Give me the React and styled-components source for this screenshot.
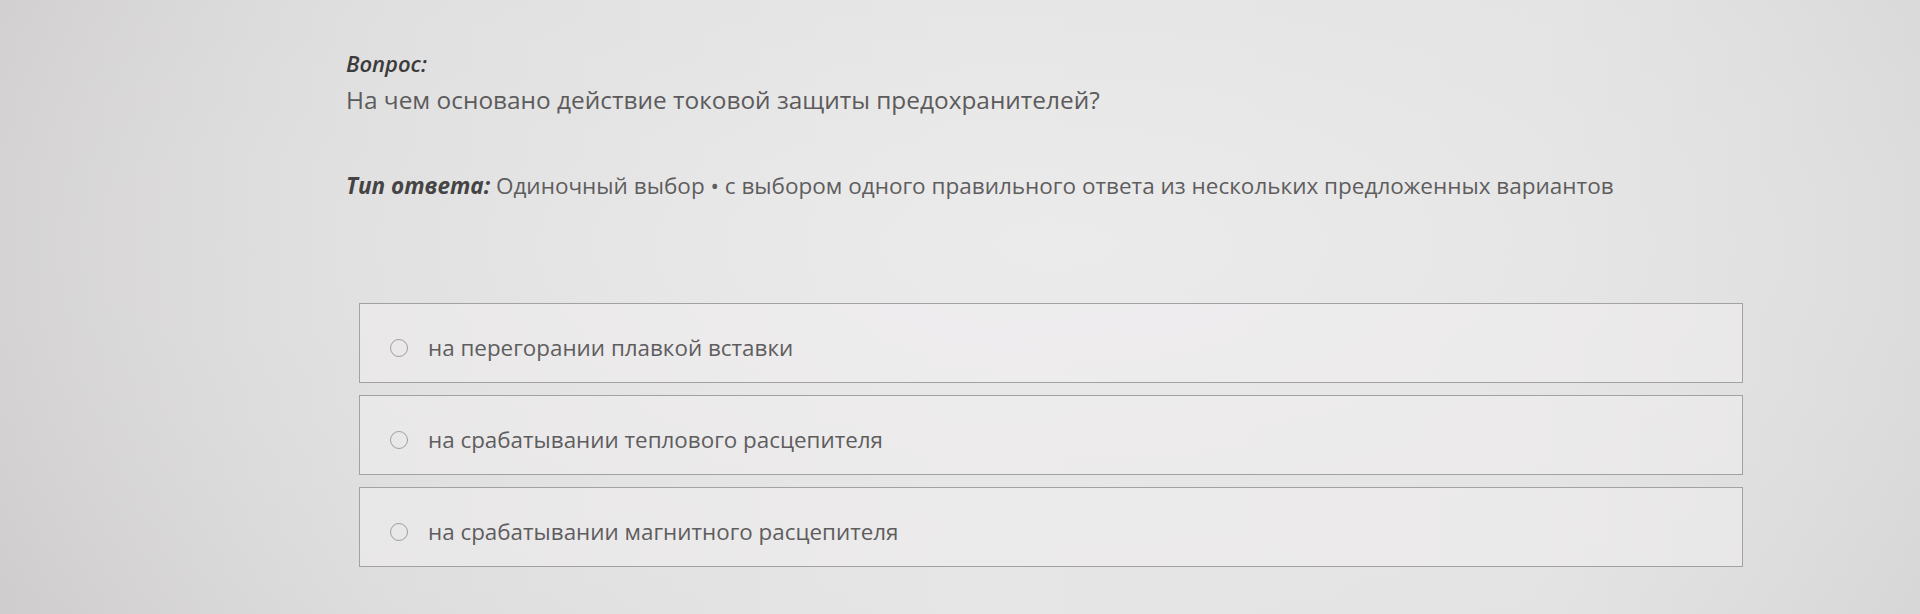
import React from "react";
import styled, { createGlobalStyle } from "styled-components";

const GlobalStyle = createGlobalStyle`
  html, body {
    margin: 0;
    padding: 0;
    height: 100%;
  }
  body {
    background: #e3e2e2;
    font-family: "Open Sans", "Noto Sans", sans-serif;
  }
`;

const Page = styled.main`
  box-sizing: border-box;
  width: 1920px;
  height: 614px;
  overflow: hidden;
  padding: 48px 0 0 346px;
  background:
    radial-gradient(ellipse 70% 90% at 55% 40%, rgba(236, 235, 236, 1) 0%, rgba(232, 231, 231, 0.6) 45%, rgba(210, 208, 209, 0) 100%),
    linear-gradient(90deg, #cfcdce 0%, #dcdbdb 20%, #e6e5e5 50%, #e3e2e2 80%, #d6d5d5 100%);
`;

const QuestionBlock = styled.section`
  display: flex;
  flex-direction: column;
  gap: 6px;
`;

const Label = styled.span`
  font-style: italic;
  font-weight: 600;
  color: #3c3b3c;
`;

const Caption = styled(Label)`
  font-size: 22px;
  line-height: 30px;
`;

const QuestionText = styled.p`
  margin: 0;
  font-size: 24.4px;
  line-height: 32px;
  color: #5c5b5c;
`;

const AnswerType = styled.p`
  margin: 55px 0 0;
  font-size: 22.5px;
  line-height: 30px;
  color: #5e5d5e;

  ${Label} {
    font-weight: 700;
    color: #454445;
  }
`;

const Options = styled.ul`
  list-style: none;
  margin: 102px 0 0 13px;
  padding: 0;
  width: 1384px;
  display: flex;
  flex-direction: column;
  gap: 12px;
`;

const Option = styled.li`
  box-sizing: border-box;
  height: 80px;
  display: flex;
  align-items: center;
  gap: 20px;
  padding: 9px 0 0 30px;
  border: 1.5px solid #a3a2a3;
  background: rgba(240, 239, 240, 0.55);
  font-size: 22.4px;
  color: #5e5d5e;
`;

const Radio = styled.span`
  box-sizing: border-box;
  width: 18px;
  height: 18px;
  border-radius: 50%;
  border: 1.5px solid #a09fa0;
  flex-shrink: 0;
`;

const options = [
  "на перегорании плавкой вставки",
  "на срабатывании теплового расцепителя",
  "на срабатывании магнитного расцепителя",
];

export default function App() {
  return (
    <>
      <GlobalStyle />
      <Page>
        <QuestionBlock>
          <Caption>Вопрос:</Caption>
          <QuestionText>На чем основано действие токовой защиты предохранителей?</QuestionText>
        </QuestionBlock>
        <AnswerType>
          <Label>Тип ответа:</Label> Одиночный выбор • с выбором одного правильного ответа из нескольких предложенных вариантов
        </AnswerType>
        <Options>
          {options.map((text) => (
            <Option key={text}>
              <Radio />
              {text}
            </Option>
          ))}
        </Options>
      </Page>
    </>
  );
}
